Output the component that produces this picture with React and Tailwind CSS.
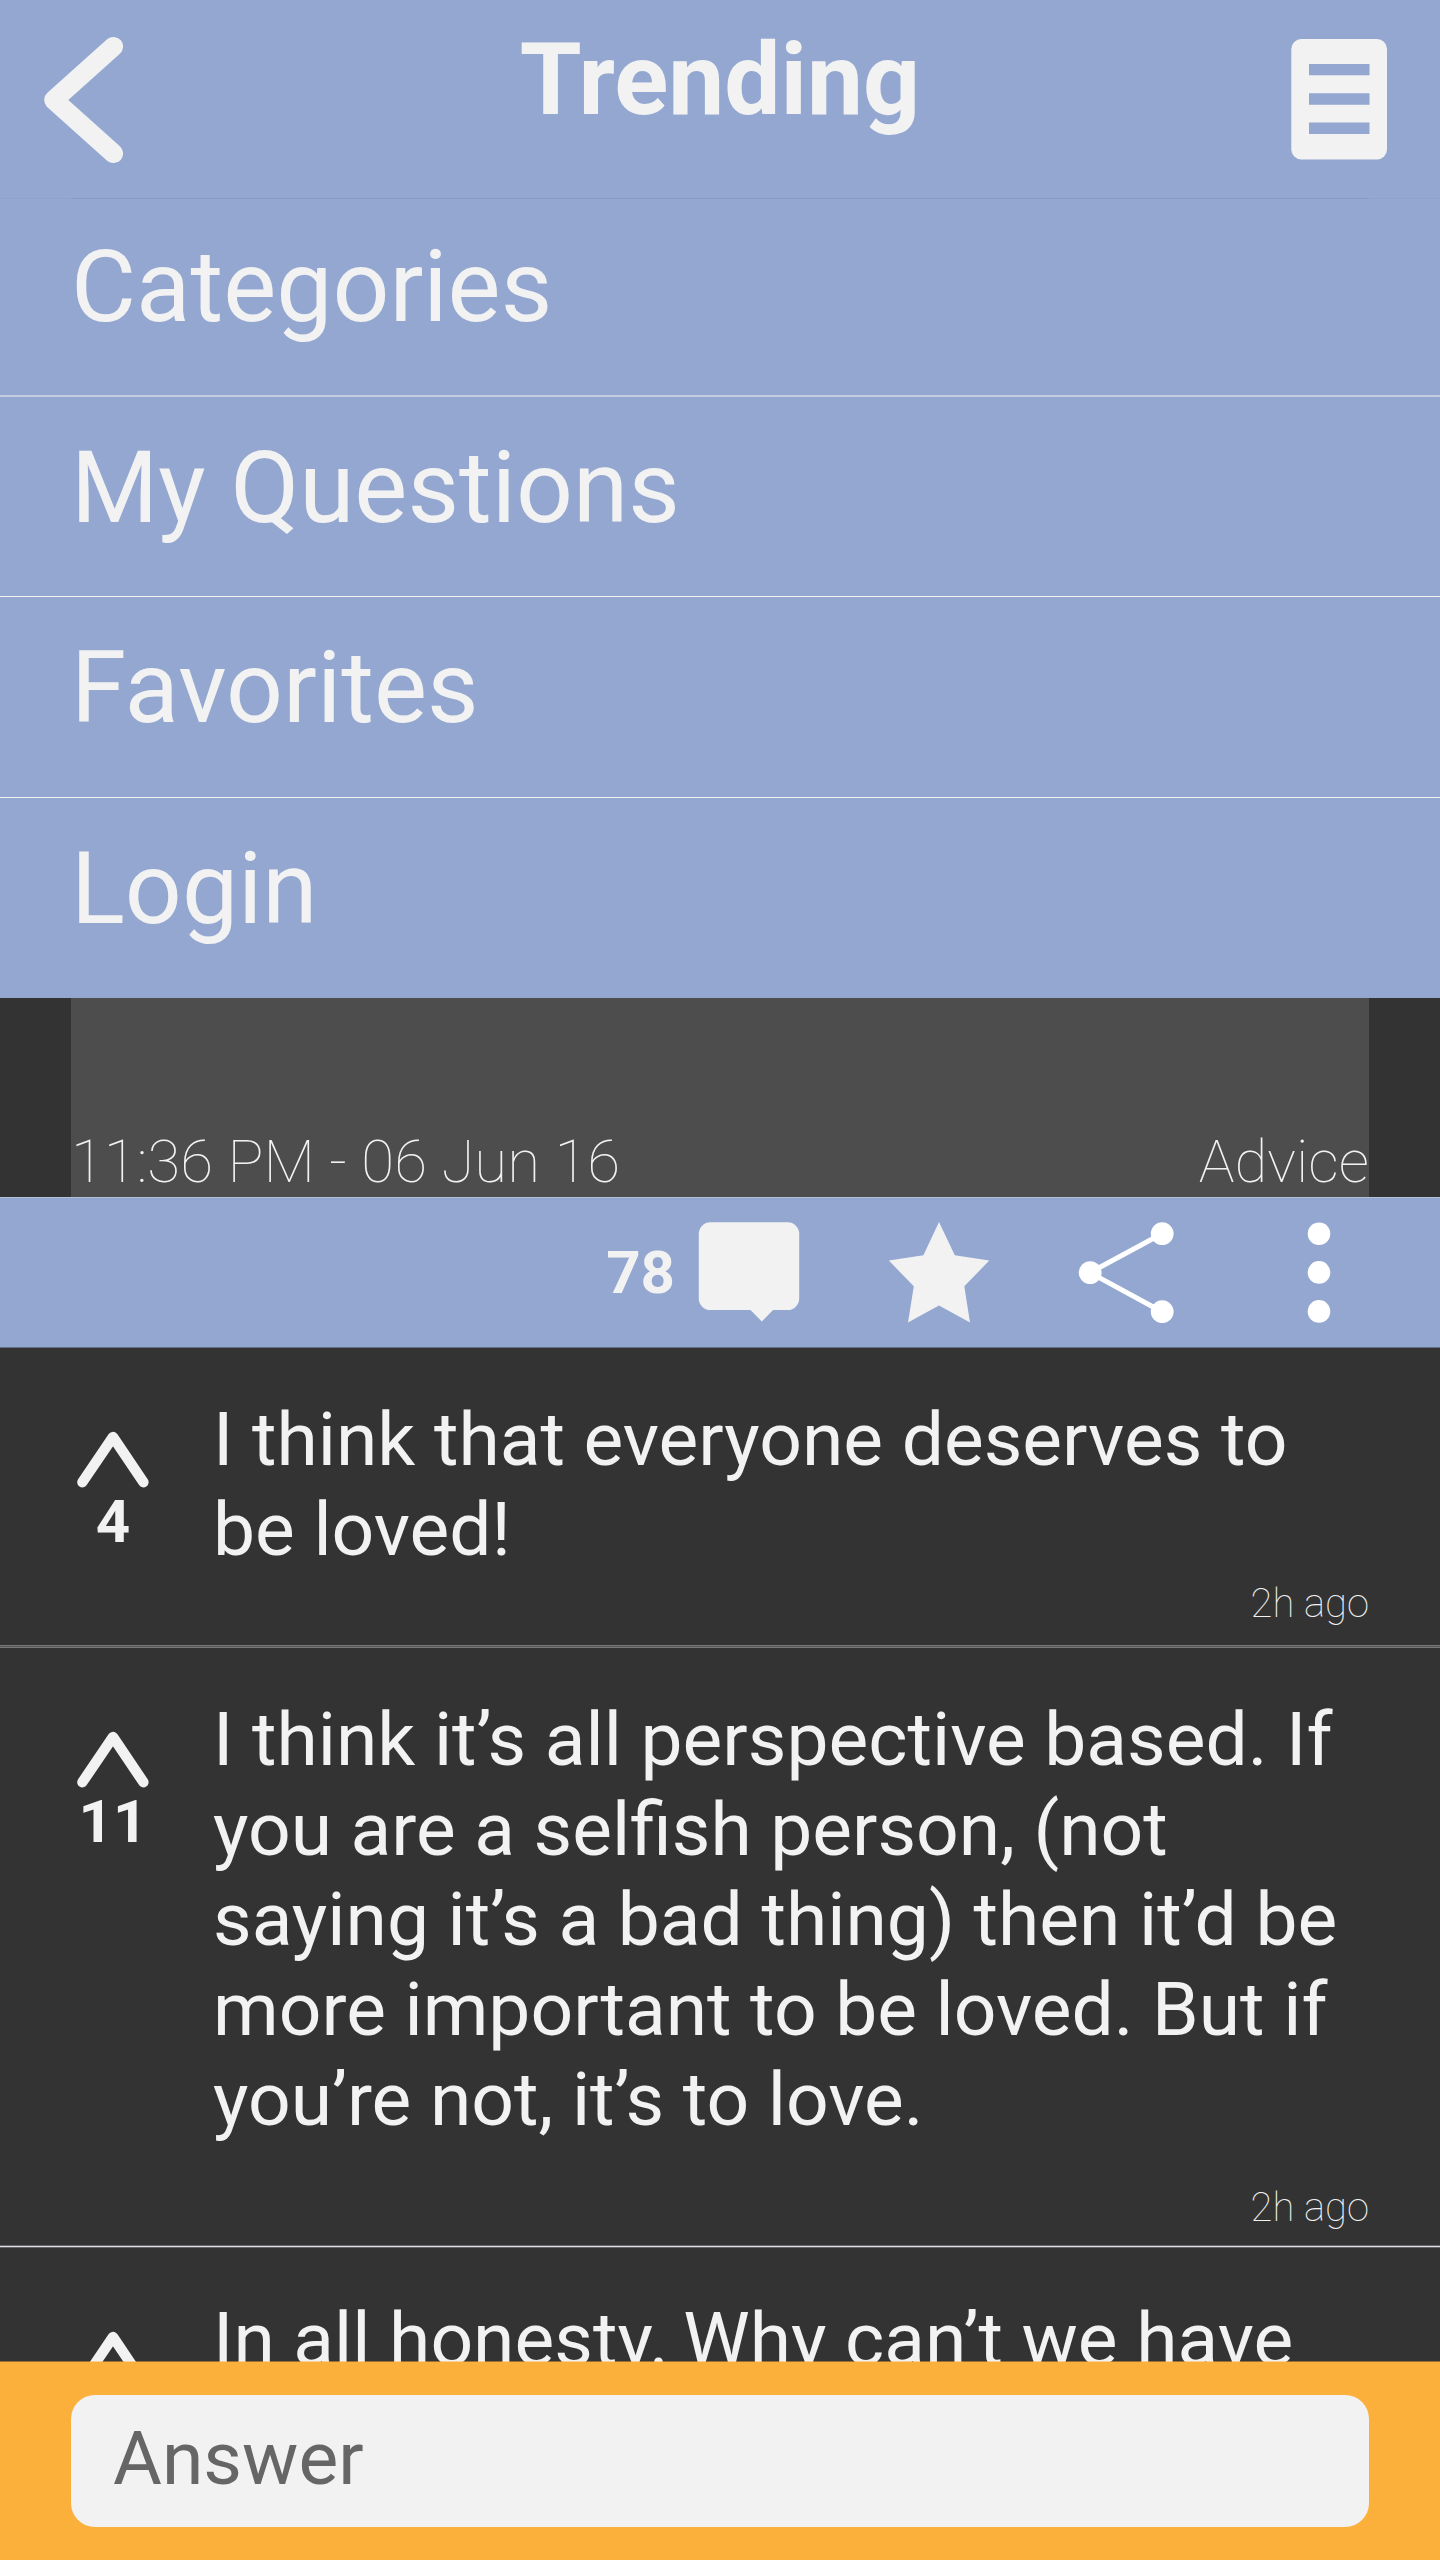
const MENU = [
  { label: "Categories", box: "h-[198px] border-b-2 border-[#c2cde3] pt-[29px]" },
  { label: "My Questions", box: "h-[200px] border-b border-[#f2f2f2] pt-[32px]" },
  { label: "Favorites", box: "h-[201px] border-b border-[#f2f2f2] pt-[32px]" },
  { label: "Login", box: "h-[200px] pt-[32px]" },
];

function BackIcon() {
  return (
    <svg className="h-[128px] w-[80px]" viewBox="44 36 80 128" fill="none">
      <path d="M113.5 46.5 53.8 100l59.7 53.5" stroke="#f2f2f2" strokeWidth="19.2" strokeLinecap="round" strokeLinejoin="round" />
    </svg>
  );
}

function ListIcon() {
  return (
    <svg className="h-[122px] w-[97px]" viewBox="1291 38 97 122">
      <rect x="1291.3" y="39" width="95.7" height="120.4" rx="10" fill="#f2f2f2" />
      <path d="M1309 64h60.5v11.3H1309zM1309 93.3h60.5v11.4H1309zM1309 122.6h60.5V134H1309z" fill="#93a7d1" />
    </svg>
  );
}

function Actions() {
  return (
    <>
      <svg className="ml-[23px] h-[102px] w-[102px]" viewBox="698 1221 102 102" fill="#f2f2f2">
        <rect x="698.8" y="1222.3" width="100.4" height="87.8" rx="11.5" />
        <path d="M750 1309.5h23.6l-11.8 12z" />
      </svg>
      <svg className="ml-[88px] h-[102px] w-[102px]" viewBox="888 1221 102 102" fill="#f2f2f2">
        <path d="M939 1222l15.8 33.3 34.5 5.2-25 25.8 5.7 36.2-31-17-31 17 5.8-36.2-25-25.8 34.6-5.2z" />
      </svg>
      <svg className="ml-[88px] h-[102px] w-[98px]" viewBox="1078 1221 98 102" fill="#fff">
        <path d="M1162 1233.7 1090 1272.6 1162 1311.7" fill="none" stroke="#fff" strokeWidth="5" />
        <circle cx="1162.2" cy="1233.7" r="11.4" />
        <circle cx="1090.2" cy="1272.6" r="11.4" />
        <circle cx="1162.2" cy="1311.7" r="11.4" />
      </svg>
      <svg className="ml-[131px] h-[102px] w-[24px]" viewBox="1307 1221 24 102" fill="#fff">
        <circle cx="1319" cy="1233.7" r="11.3" />
        <circle cx="1319" cy="1272.4" r="11.3" />
        <circle cx="1319" cy="1311.4" r="11.3" />
      </svg>
    </>
  );
}

function Answer({ votes, lines, time, height }) {
  return (
    <article className={`flex shrink-0 ${height}`}>
      <div className="ml-[63px] flex w-[100px] flex-col items-center pt-[82px]">
        <svg className="h-[60px] w-[74px]" viewBox="0 0 74 60" fill="none">
          <path d="M6.4 52.2 37 7l30.4 45.2" stroke="#f2f2f2" strokeWidth="10.4" strokeLinecap="round" strokeLinejoin="round" />
        </svg>
        <span className="mt-[-3px] text-[60px] leading-[70px] font-bold">{votes}</span>
      </div>
      <div className="flex w-[1206px] flex-col pt-[46px] pl-[50px]">
        <p className="text-[74.93px] leading-[90px] whitespace-nowrap">
          {lines.map((l, i) => (
            <span key={i} className="block">{l}</span>
          ))}
        </p>
        {time && <time className="mt-auto text-right text-[40px] leading-[48px] font-thin">{time}</time>}
      </div>
    </article>
  );
}

export default function App() {
  return (
    <div className="flex h-[2560px] w-[1440px] flex-col overflow-hidden bg-[#333333] font-[Roboto,sans-serif] text-[#f2f2f2] [text-rendering:optimizeLegibility]">
      <nav className="shrink-0 bg-[#93a7d1]">
        <header className="flex h-[198px] justify-between pr-[52px] pl-[44px]">
          <button className="mt-[36px] h-[128px] w-[97px]"><BackIcon /></button>
          <h1 className="mt-[21px] ml-[8px] text-[100px] leading-[118px] font-bold">Trending</h1>
          <button className="mt-[38px] h-[122px] w-[97px]"><ListIcon /></button>
        </header>
        <div className="h-px bg-[#90a2cb] px-[71px]"><div className="h-px bg-[#8999bf]" /></div>
        <ul>
          {MENU.map((m) => (
            <li key={m.label} className={`${m.box} pl-[71px] text-[100px] leading-[118px]`}>{m.label}</li>
          ))}
        </ul>
      </nav>
      <section className="mx-[71px] flex h-[199px] shrink-0 items-end justify-between bg-[#4d4d4d] text-[60px] leading-[70px] font-thin">
        <time>11:36 PM - 06 Jun 16</time>
        <span>Advice</span>
      </section>
      <div className="flex h-[151px] shrink-0 items-start justify-end border-t border-b border-t-[#b4bfd6] border-b-[#65708a] bg-[#93a7d1] pt-[23px] pr-[109px]">
        <span className="mt-[17px] text-[60px] leading-[70px] font-bold">78</span>
        <Actions />
      </div>
      <main className="flex h-[1014px] shrink-0 flex-col overflow-hidden">
        <Answer votes="4" lines={["I think that everyone deserves to", "be loved!"]} time="2h ago" height="h-[297px] pb-[17px]" />
        <div className="h-[3px] shrink-0 border-y border-[#777777] bg-[#555555]" />
        <Answer
          votes="11"
          lines={["I think it’s all perspective based. If", "you are a selfish person, (not", "saying it’s a bad thing) then it’d be", "more important to be loved. But if", "you’re not, it’s to love."]}
          time="2h ago"
          height="h-[597px] pb-[13px]"
        />
        <div className="h-[3px] shrink-0 border-y border-[#66666b] bg-[#e0e0e0]" />
        <Answer votes="" lines={[<>In all honesty.<span className="tracking-[-4px]"> </span>Why can’t we have</>]} height="h-[200px]" />
      </main>
      <footer className="z-10 -mt-px h-[199px] shrink-0 border-t border-[#fbb03b]/50 bg-[#fbb03b] bg-clip-padding px-[71px] pt-[33px]">
        <input
          placeholder="Answer"
          className="block h-[132px] w-full rounded-[24px] bg-[#f2f2f2] px-[42px] pb-[7px] text-[75px] text-[#666666] outline-none placeholder:text-[#666666]"
        />
      </footer>
    </div>
  );
}
